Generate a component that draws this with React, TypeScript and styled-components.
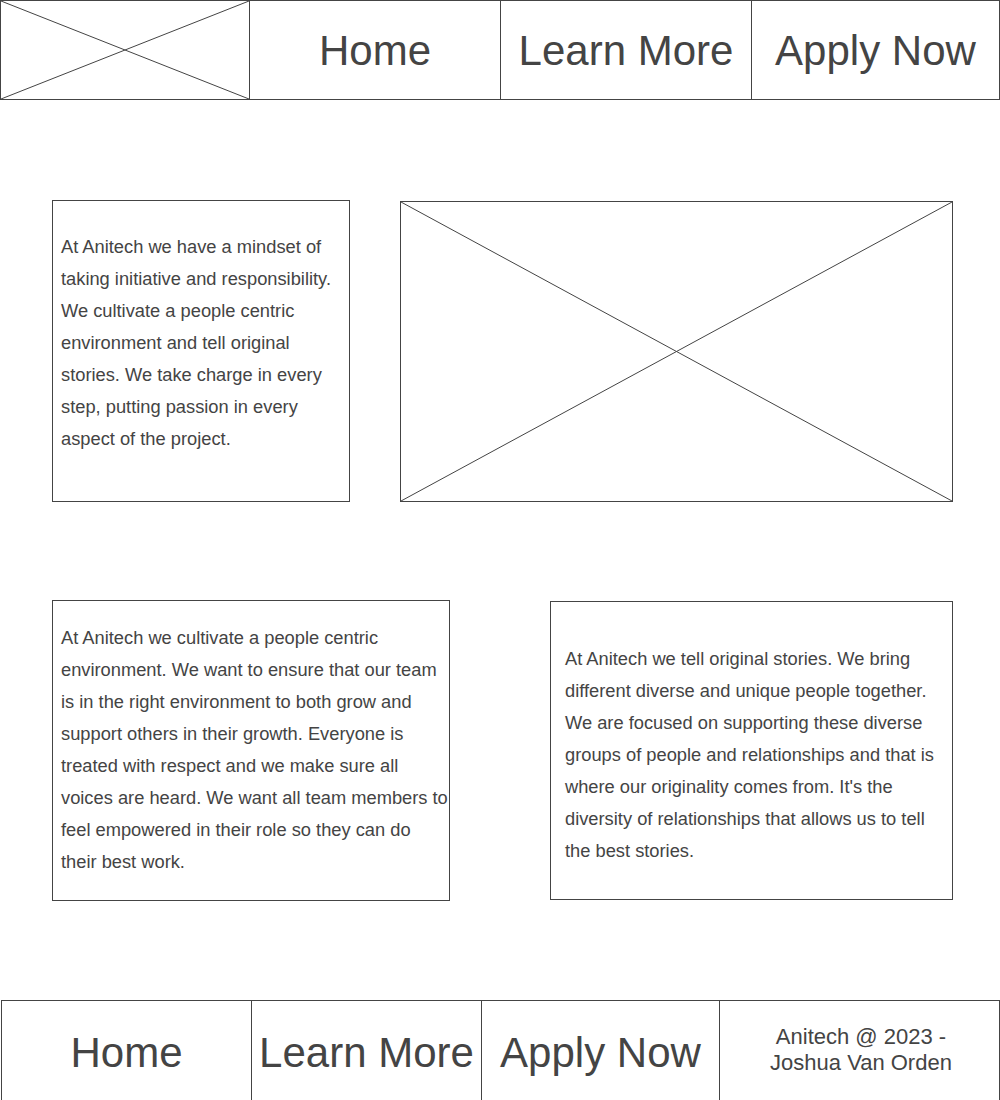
import React from 'react';
import { styled, createGlobalStyle } from 'styled-components';

const GlobalStyle = createGlobalStyle`
  body {
    margin: 0;
    background: #fff;
    font-family: "Liberation Sans", Arial, sans-serif;
    color: #444;
  }
`;

const Page = styled.div`
  width: 1000px;
  display: flex;
  flex-direction: column;
`;

const NavBar = styled.nav<{ $offset?: number; $height: number; $top?: number }>`
  display: flex;
  box-sizing: border-box;
  margin-left: ${(p) => p.$offset || 0}px;
  margin-top: ${(p) => p.$top || 0}px;
  width: ${(p) => 1000 - (p.$offset || 0)}px;
  height: ${(p) => p.$height}px;
  border: 1px solid #444;
`;

const NavCell = styled.div<{ $w: number; $first?: boolean }>`
  box-sizing: border-box;
  width: ${(p) => p.$w}px;
  flex-shrink: 0;
  border-left: ${(p) => (p.$first ? 'none' : '1px solid #444')};
  display: flex;
  align-items: center;
  justify-content: center;
  padding-top: 2px;
  font-size: 42px;
  color: #444;
  white-space: nowrap;
`;

const Credit = styled.div`
  font-size: 22px;
  line-height: 26px;
  text-align: center;
  white-space: normal;
  margin-top: -7px;
  padding-left: 3px;
`;

const Row = styled.section<{ $top: number; $gap: number }>`
  display: flex;
  align-items: flex-start;
  margin-top: ${(p) => p.$top}px;
  padding-left: 52px;
  gap: ${(p) => p.$gap}px;
`;

const Card = styled.div<{ $w: number; $h: number; $pt: number; $pl: number; $shift?: number }>`
  box-sizing: border-box;
  width: ${(p) => p.$w}px;
  height: ${(p) => p.$h}px;
  margin-top: ${(p) => p.$shift || 0}px;
  border: 1px solid #444;
  padding: ${(p) => p.$pt}px 0 0 ${(p) => p.$pl}px;
  flex-shrink: 0;
`;

const Copy = styled.p<{ $w: number }>`
  margin: 0;
  width: ${(p) => p.$w}px;
  font-size: 18.3px;
  line-height: 32px;
  color: #444;
`;

const Placeholder = styled.div<{ $w: number; $h: number; $shift?: number; $bare?: boolean }>`
  box-sizing: border-box;
  width: ${(p) => p.$w}px;
  height: ${(p) => p.$h}px;
  margin-top: ${(p) => p.$shift || 0}px;
  border: ${(p) => (p.$bare ? 'none' : '1px solid #444')};
  flex-shrink: 0;
  svg {
    display: block;
    width: 100%;
    height: 100%;
  }
`;

function Cross() {
  return (
    <svg viewBox="0 0 100 100" preserveAspectRatio="none">
      <line x1="0" y1="0" x2="100" y2="100" stroke="#444" strokeWidth="1" vectorEffect="non-scaling-stroke" />
      <line x1="100" y1="0" x2="0" y2="100" stroke="#444" strokeWidth="1" vectorEffect="non-scaling-stroke" />
    </svg>
  );
}

export default function App() {
  return (
    <Page>
      <GlobalStyle />
      <NavBar $height={100}>
        <NavCell $w={248} $first style={{ paddingTop: 0 }}>
          <Placeholder $w={248} $h={98} $bare>
            <Cross />
          </Placeholder>
        </NavCell>
        <NavCell $w={251}>Home</NavCell>
        <NavCell $w={251}>Learn More</NavCell>
        <NavCell $w={248}>Apply Now</NavCell>
      </NavBar>

      <Row $top={100} $gap={50}>
        <Card $w={298} $h={302} $pt={30} $pl={8}>
          <Copy $w={288}>
            At Anitech we have a mindset of taking initiative and responsibility. We cultivate a people centric
            environment and tell original stories. We take charge in every step, putting passion in every aspect of
            the project.
          </Copy>
        </Card>
        <Placeholder $w={553} $h={301} $shift={1}>
          <Cross />
        </Placeholder>
      </Row>

      <Row $top={98} $gap={100}>
        <Card $w={398} $h={301} $pt={21} $pl={8}>
          <Copy $w={390}>
            At Anitech we cultivate a people centric environment. We want to ensure that our team is in the right
            environment to both grow and support others in their growth. Everyone is treated with respect and we
            make sure all voices are heard. We want all team members to feel empowered in their role so they can
            do their best work.
          </Copy>
        </Card>
        <Card $w={403} $h={299} $pt={41} $pl={14} $shift={1}>
          <Copy $w={380}>
            At Anitech we tell original stories. We bring different diverse and unique people together. We are
            focused on supporting these diverse groups of people and relationships and that is where our
            originality comes from. It's the diversity of relationships that allows us to tell the best stories.
          </Copy>
        </Card>
      </Row>

      <NavBar $offset={1} $height={104} $top={99}>
        <NavCell $w={249} $first>Home</NavCell>
        <NavCell $w={230}>Learn More</NavCell>
        <NavCell $w={238}>Apply Now</NavCell>
        <NavCell $w={280}>
          <Credit>
            Anitech @ 2023 -
            <br />
            Joshua Van Orden
          </Credit>
        </NavCell>
      </NavBar>
    </Page>
  );
}
